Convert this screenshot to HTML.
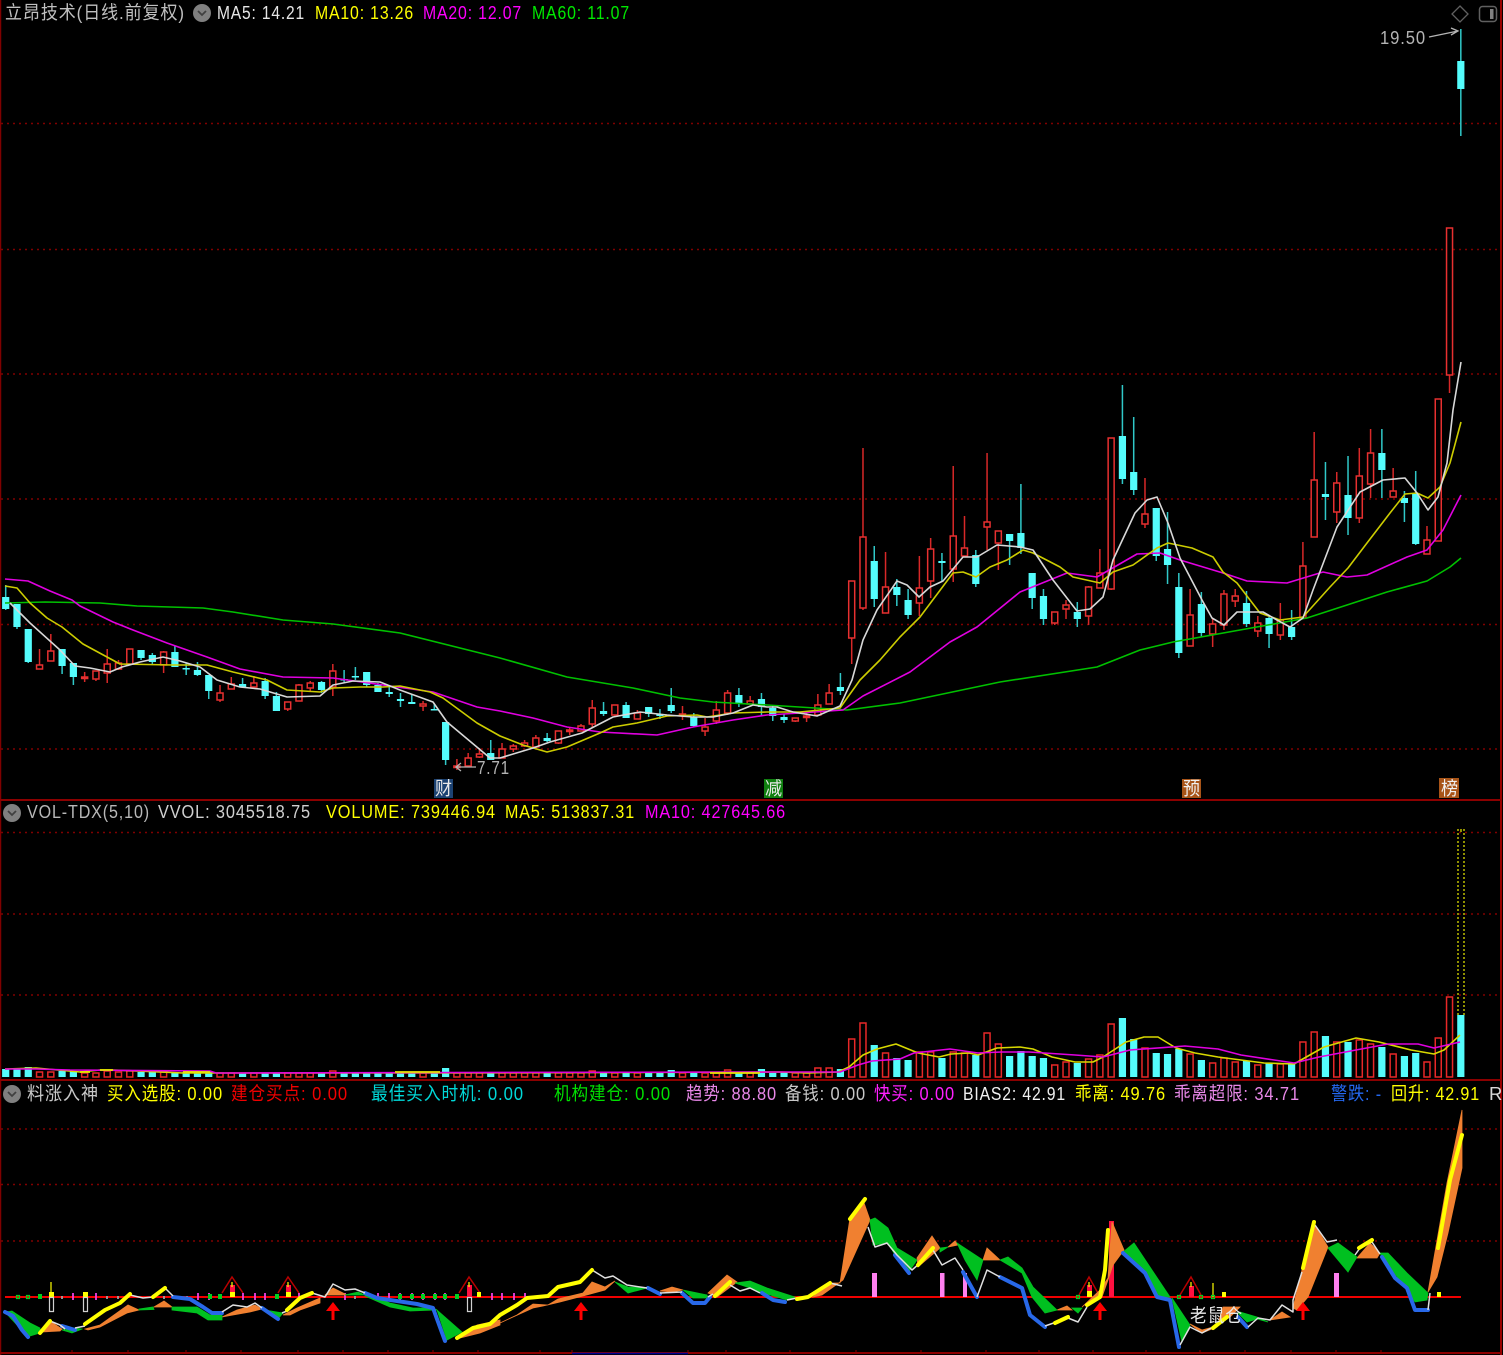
<!DOCTYPE html>
<html lang="zh"><head><meta charset="utf-8"><title>立昂技术</title>
<style>
html,body{margin:0;padding:0;background:#000;width:1503px;height:1355px;overflow:hidden}
svg{display:block}
text{font-family:"Liberation Sans","Noto Sans CJK SC",sans-serif;font-size:18.5px;letter-spacing:1px}
.g{stroke:#800000;stroke-width:1.5;stroke-dasharray:2 4;fill:none}
.l{fill:none;stroke-width:1.6;stroke-linejoin:round}
.y{fill:none;stroke:#ffff00;stroke-width:4;stroke-linejoin:round;stroke-linecap:round}
.b{fill:none;stroke:#2868e8;stroke-width:4;stroke-linejoin:round;stroke-linecap:round}
.w{fill:none;stroke:#e0e0e0;stroke-width:1.5;stroke-linejoin:round}
.o{fill:#f08030;stroke:#f08030;stroke-width:.8}.n{fill:#00c020;stroke:#00c020;stroke-width:.8}
</style></head><body>
<svg id="s" xmlns="http://www.w3.org/2000/svg" width="1503" height="1355" viewBox="0 0 1503 1355">
<rect width="1503" height="1355" fill="#000"/>
<!-- frame -->
<path d="M.5 0V1355" stroke="#800000" stroke-width="1.5"/>
<path d="M1501 0V1355" stroke="#c00000" stroke-width="1.6"/>
<path d="M0 800H1501M0 1080H1501M0 1353H1501" stroke="#8c0000" stroke-width="2"/>
<path d="M1 1353H1501" stroke="#8c0000" stroke-width="2"/>
<path d="M72 1350V1353M128 1350V1353M186 1350V1353M241 1350V1353M298 1350V1353M343 1350V1353M388 1350V1353M433 1350V1353M478 1350V1353M540 1350V1353M572 1350V1353M688 1350V1353M726 1350V1353M790 1350V1353M856 1350V1353M921 1350V1353M986 1350V1353M1039 1350V1353M1093 1350V1353M1146 1350V1353M1200 1350V1353M1245 1350V1353M1291 1350V1353M1336 1350V1353M1381 1350V1353" stroke="#8c0000" stroke-width="1"/>
<path d="M572 1353.5H688" stroke="#000090" stroke-width="1.5"/>
<!-- grid -->
<path class="g" d="M1 123.5H1501M1 249.5H1501M1 374H1501M1 499H1501M1 624.5H1501M1 749H1501M1 832.5H1501M1 914H1501M1 995H1501M1 1129H1501M1 1184.5H1501M1 1241H1501"/>
<g id="candles"></g>
<g id="vols"></g>
<!-- MA lines -->
<polyline class="l" stroke="#00c000" points="5,603 45,602 100,603 137,606 203,608 233,612 283,620 333,624 400,633 500,658 567,677 633,688 680,698 713,702 767,705 847,710 900,703 1000,682 1097,667 1140,650 1173,642 1240,630 1307,618 1387,592 1427,581 1450,567 1461,558"/>
<polyline class="l" stroke="#e000e0" points="5,579 28,581 50,591 72,600 80,606 113,622 133,630 167,643 207,657 240,669 283,677 333,678 383,685 433,692 477,707 500,711 533,718 567,727 600,732 657,735 693,727 733,720 767,715 800,713 843,710 863,696 910,672 950,642 977,627 1020,592 1067,573 1097,577 1137,554 1160,553 1180,560 1223,573 1247,581 1287,583 1323,572 1347,577 1367,575 1407,557 1427,550 1443,530 1461,495"/>
<polyline class="l" stroke="#cccc00" points="5,586 17,588 30,603 47,618 62,627 83,644 107,657 120,664 173,665 207,665 233,672 267,680 287,690 320,692 333,688 360,687 383,687 400,686 430,692 443,698 477,723 500,736 523,745 547,752 567,747 600,733 613,727 637,723 667,716 697,715 707,717 733,713 767,712 800,712 840,708 860,680 880,660 900,637 920,617 953,573 963,572 976,577 990,567 1007,560 1023,550 1033,553 1060,567 1073,577 1100,583 1113,572 1133,565 1157,548 1168,543 1192,548 1213,557 1223,572 1237,583 1260,613 1280,620 1303,617 1330,587 1348,568 1367,543 1390,513 1405,494 1417,493 1428,498 1440,487 1450,463 1461,422"/>
<polyline class="l" stroke="#d8d8d8" points="10,603 30,623 60,650 75,666 90,668 110,672 122,667 140,662 163,657 180,661 200,667 217,680 240,687 260,689 287,697 320,696 333,685 353,681 380,682 400,690 433,702 447,722 490,758 500,758 533,748 550,742 582,733 613,717 640,712 667,715 693,717 713,717 733,713 753,705 767,707 777,707 793,712 817,716 840,706 852,680 863,640 877,610 897,581 907,585 919,597 930,587 943,581 963,557 977,557 997,545 1020,547 1033,550 1053,580 1077,611 1090,609 1103,597 1113,560 1135,513 1147,500 1157,497 1168,523 1180,558 1202,600 1212,618 1224,625 1237,612 1263,612 1277,620 1290,627 1303,618 1313,590 1337,527 1360,492 1383,480 1405,478 1417,493 1428,510 1438,497 1447,463 1453,410 1461,362"/>
<!-- price notes -->
<text x="1380" y="44" fill="#b4b4b4" textLength="46" lengthAdjust="spacingAndGlyphs">19.50</text>
<path d="M1429 37L1458 31M1451 28L1458 31L1451 35" fill="none" stroke="#b4b4b4" stroke-width="1.3"/>
<text x="477" y="774" fill="#b4b4b4" textLength="33" lengthAdjust="spacingAndGlyphs">7.71</text>
<path d="M476 767H456M461 763L456 767L461 771" fill="none" stroke="#b4b4b4" stroke-width="1.3"/>
<!-- event tags -->
<rect x="434" y="779" width="19" height="19" fill="#1c4272"/><text x="435" y="795" fill="#e8e8e8" textLength="18" lengthAdjust="spacingAndGlyphs">财</text>
<rect x="764" y="779" width="19" height="19" fill="#108010"/><text x="765" y="795" fill="#e8e8e8" textLength="18" lengthAdjust="spacingAndGlyphs">减</text>
<rect x="1182" y="779" width="19" height="19" fill="#a85418"/><text x="1183" y="795" fill="#f0f0f0" textLength="18" lengthAdjust="spacingAndGlyphs">预</text>
<rect x="1439" y="778" width="20" height="20" fill="#a85418"/><text x="1441" y="795" fill="#f0f0f0" textLength="18" lengthAdjust="spacingAndGlyphs">榜</text>
<!-- volume overflow dotted -->
<path d="M1458 829V1016M1464 829V1016" stroke="#909000" stroke-width="2" stroke-dasharray="2 2" fill="none"/>
<path d="M1461 829V832" stroke="#909000" stroke-width="2"/>
<!-- volume MA -->
<polyline class="l" stroke="#d8d800" points="5,1069 36,1068 80,1072 100,1070 113,1070 183,1073 300,1073 440,1073 780,1072 808,1073 838,1072 849,1067 863,1055 877,1049 896,1044 918,1053 939,1057 951,1054 969,1053 978,1055 997,1048 1020,1047 1033,1049 1052,1057 1075,1062 1093,1062 1103,1057 1126,1042 1144,1037 1158,1037 1176,1048 1195,1053 1218,1057 1241,1060 1264,1063 1294,1064 1301,1060 1324,1047 1356,1038 1379,1042 1411,1050 1434,1054 1444,1050 1460,1035"/>
<polyline class="l" stroke="#e000e0" points="5,1069 36,1069 70,1070 210,1071 216,1073 780,1072 840,1072 858,1065 872,1061 900,1059 914,1053 950,1049 978,1053 1001,1052 1029,1052 1075,1055 1103,1057 1130,1050 1185,1046 1218,1049 1241,1055 1294,1063 1319,1057 1356,1050 1388,1044 1418,1044 1434,1048 1460,1042"/>
<path d="M80 1072H90M100 1070H113M183 1072H210M395 1072H440M710 1073H760" stroke="#e8e800" stroke-width="1.8"/>
<!-- indicator: baseline -->
<path d="M5 1297H1461" stroke="#f00000" stroke-width="2"/>
<!-- triangles -->
<path d="M222 1293L232 1277L243 1293M278 1293L288 1277L299 1293M459 1293L469 1277L480 1293M1079 1295L1089 1277L1099 1295M1180 1295L1191 1277L1201 1295" fill="none" stroke="#b80000" stroke-width="1.5"/>
<path d="M230 1285h5v8h-5zM286 1285h5v8h-5zM467 1285h5v12h-5zM1087 1285h5v7h-5zM1189 1286h5v11h-5z" fill="#ff1040"/>
<path d="M230 1292h5v5h-5zM286 1292h5v5h-5zM1087 1291h5v6h-5zM49 1292h5v5h-5zM83 1292h5v5h-5zM1222 1292h4v5h-4zM1437 1292h4v5h-4zM477 1292h4v5h-4z" fill="#ffff00"/>
<path d="M51 1282V1292M232 1282V1287M288 1282V1287M469 1282V1287M1089 1282V1287M1191 1282V1287M1213 1283V1297" stroke="#ffff00" stroke-width="1.2"/>
<path d="M49.5 1297.5h4v14h-4zM83.5 1297.5h4v14h-4zM467.5 1297.5h4v14h-4z" fill="#000" stroke="#d0d0d0" stroke-width="1.2"/>
<!-- ticks -->
<path d="M73 1293V1300M96 1293V1300M198 1293V1300M209 1293V1300M243 1293V1300M255 1293V1300M265 1293V1300M299 1293V1300M345 1293V1300M378 1293V1300M389 1293V1300M400 1293V1300M412 1293V1300M423 1293V1300M435 1293V1300M445 1293V1300M492 1293V1300M502 1293V1300M514 1293V1300M525 1293V1300" stroke="#f040e0" stroke-width="1.8"/>
<path d="M62 1296V1299M107 1296V1299M118 1296V1299M164 1296V1299M187 1296V1299M355 1296V1299" stroke="#a0a0a0" stroke-width="1.8"/>
<path d="M16.5 1295.5h3v3h-3zM26.5 1295.5h3v3h-3zM1076.5 1295.5h3v3h-3zM1177.5 1295.5h3v3h-3zM1199.5 1295.5h3v3h-3zM1211.5 1295.5h3v3h-3z" fill="none" stroke="#00d020" stroke-width="1.2"/>
<path d="M38 1294h4v5h-4zM208 1294h4v5h-4zM218 1294h4v5h-4zM275 1294h4v5h-4zM398 1294h4v5h-4zM410 1294h4v5h-4zM421 1294h4v5h-4zM433 1294h4v5h-4zM443 1294h4v5h-4zM455 1294h4v5h-4z" fill="#00d020"/>
<!-- pink bars -->
<path d="M872 1273h5v24h-5zM940 1273h4.500v24h-4.500zM963 1273h4v24h-4zM1334 1273h5v24h-5z" fill="#ff80f0"/>
<path d="M1109 1221h5v76h-5z" fill="#ff1040"/>
<!-- orange bands -->
<g class="o">
<polygon points="40,1333 50,1321 62,1329 60,1331 42,1332"/>
<polygon points="85,1329 100,1325 128,1305 139,1310 127,1313 100,1327 88,1330"/>
<polygon points="154,1307 164,1301 172,1307"/>
<polygon points="222,1317 237,1310 255,1305 262,1309 250,1312 233,1315"/>
<polygon points="283,1315 297,1308 320,1298 320,1303 300,1310 290,1315"/>
<polygon points="325,1295 333,1288 347,1295"/>
<polygon points="460,1338 480,1333 500,1325 500,1320 477,1325"/>
<polygon points="500,1323 517,1315 533,1304 548,1305 558,1299 583,1293 592,1282 605,1287 615,1281 605,1290 583,1296 560,1302 543,1306 533,1308 513,1317"/>
<polygon points="660,1291 672,1287 683,1290 672,1292"/>
<polygon points="708,1293 727,1275 737,1282 717,1297"/>
<polygon points="813,1297 828,1283 840,1283 850,1218 863,1200 870,1220 843,1280 822,1295"/>
<polygon points="917,1258 932,1236 940,1248 918,1267"/>
<polygon points="948,1247 955,1241 958,1245"/>
<polygon points="983,1260 987,1248 1000,1260"/>
<polygon points="1057,1310 1067,1306 1072,1310"/>
<polygon points="1082,1307 1100,1290 1108,1278 1112,1222 1124,1250 1113,1265 1108,1280 1102,1297 1087,1303"/>
<polygon points="1190,1324 1202,1333 1217,1327 1223,1307 1240,1307 1230,1317 1213,1327 1202,1330"/>
<polygon points="1270,1320 1282,1312 1290,1317"/>
<polygon points="1293,1308 1302,1270 1313,1222 1328,1247 1308,1297 1297,1310"/>
<polygon points="1357,1258 1370,1243 1380,1253 1377,1258"/>
<polygon points="1428,1292 1447,1183 1462,1110 1462,1168 1448,1233 1437,1277"/>
</g>
<!-- green bands -->
<g class="n">
<polygon points="5,1312 12,1311 30,1323 40,1328 40,1333 30,1336 28,1337"/>
<polygon points="62,1330 72,1333 82,1329 75,1328"/>
<polygon points="139,1309 153,1307 154,1309.500 139,1310"/>
<polygon points="172,1307 197,1307 210,1315 222,1315 222,1320 208,1320 197,1313 172,1310"/>
<polygon points="265,1310 283,1313 278,1319"/>
<polygon points="345,1295 358,1292 365,1295"/>
<polygon points="365,1293 390,1303 413,1308 433,1308 437,1310 410,1311 390,1307 365,1296"/>
<polygon points="437,1310 462,1332 447,1340"/>
<polygon points="615,1282 628,1287 647,1288 628,1293"/>
<polygon points="683,1290 707,1295 708,1298 693,1298"/>
<polygon points="735,1283 750,1281 767,1288 795,1297 787,1300 760,1292 747,1287"/>
<polygon points="870,1220 875,1218 888,1228 897,1248 917,1260 908,1273 895,1255 888,1243 873,1245"/>
<polygon points="940,1248 948,1247 940,1252"/>
<polygon points="957,1243 983,1260 977,1280 965,1260"/>
<polygon points="1000,1260 1008,1257 1022,1268 1033,1287 1057,1310 1045,1313 1032,1297 1022,1273"/>
<polygon points="1072,1308 1082,1308 1078,1313"/>
<polygon points="1123,1252 1134,1243 1170,1297 1157,1297 1145,1273"/>
<polygon points="1172,1298 1190,1325 1182,1342"/>
<polygon points="1240,1312 1257,1317 1268,1322 1257,1319 1247,1322 1238,1313"/>
<polygon points="1328,1248 1338,1243 1357,1257 1348,1272"/>
<polygon points="1380,1253 1388,1253 1407,1273 1428,1293 1427,1300 1415,1302 1405,1287 1382,1257"/>
</g>
<!-- blue thick -->
<polyline class="b" points="5,1312 13,1316 22,1330 28,1337"/>
<polyline class="b" points="62,1326 75,1330"/>
<polyline class="b" points="173,1297 190,1299 203,1307 212,1313 222,1313"/>
<polyline class="b" points="262,1308 278,1319"/>
<polyline class="b" points="365,1293 377,1298 417,1304 433,1308 445,1341"/>
<polyline class="b" points="648,1288 660,1294"/>
<polyline class="b" points="682,1293 693,1303 705,1303 710,1297"/>
<polyline class="b" points="762,1293 773,1300 785,1302"/>
<polyline class="b" points="895,1255 909,1273"/>
<polyline class="b" points="963,1272 977,1297"/>
<polyline class="b" points="1000,1277 1022,1288 1030,1315 1045,1327"/>
<polyline class="b" points="1123,1253 1145,1273 1157,1297 1170,1300 1179,1347"/>
<polyline class="b" points="1238,1317 1247,1327"/>
<polyline class="b" points="1382,1257 1395,1278 1407,1288 1415,1310 1428,1310"/>
<!-- white thin -->
<polyline class="w" points="50,1321 60,1325 65,1329"/>
<polyline class="w" points="75,1328 85,1326"/>
<polyline class="w" points="130,1295 143,1298 153,1297"/>
<polyline class="w" points="165,1288 173,1296"/>
<polyline class="w" points="222,1312 233,1305 247,1307 255,1303 262,1308"/>
<polyline class="w" points="282,1313 287,1311"/>
<polyline class="w" points="312,1293 325,1297 333,1284 345,1290 355,1289 365,1293"/>
<polyline class="w" points="592,1270 605,1278 613,1276 627,1285 647,1288"/>
<polyline class="w" points="660,1293 682,1292"/>
<polyline class="w" points="708,1297 713,1294"/>
<polyline class="w" points="730,1285 740,1291 750,1288 760,1293"/>
<polyline class="w" points="787,1300 797,1298"/>
<polyline class="w" points="830,1283 842,1286"/>
<polyline class="w" points="868,1227 875,1247 887,1243 897,1255 912,1270 920,1263 933,1250 942,1265 955,1258 963,1270"/>
<polyline class="w" points="977,1297 987,1270 1000,1277"/>
<polyline class="w" points="1045,1326 1068,1318 1078,1322 1087,1307"/>
<polyline class="w" points="1180,1345 1190,1327 1202,1333 1213,1327"/>
<polyline class="w" points="1248,1327 1258,1318 1270,1320 1282,1305 1293,1312 1293,1300 1302,1272"/>
<polyline class="w" points="1315,1225 1327,1242 1337,1240"/>
<polyline class="w" points="1355,1255 1360,1248 1372,1242 1380,1254"/>
<polyline class="w" points="1428,1310 1430,1293"/>
<!-- yellow thick -->
<polyline class="y" points="40,1333 50,1321"/>
<polyline class="y" points="85,1324 95,1317 105,1310 120,1303 130,1294"/>
<polyline class="y" points="153,1297 165,1288"/>
<polyline class="y" points="287,1310 300,1298 312,1293"/>
<polyline class="y" points="457,1338 473,1328 490,1324 500,1315 517,1305 527,1298 548,1296 558,1287 580,1282 592,1270"/>
<polyline class="y" points="715,1296 730,1282"/>
<polyline class="y" points="797,1299 808,1297 830,1283"/>
<polyline class="y" points="850,1219 865,1199"/>
<polyline class="y" points="918,1265 933,1248"/>
<polyline class="y" points="1055,1323 1068,1317"/>
<polyline class="y" points="1087,1305 1100,1297 1105,1270 1108,1230"/>
<polyline class="y" points="1213,1328 1227,1317"/>
<polyline class="y" points="1303,1268 1308,1247 1314,1222"/>
<polyline class="y" points="1359,1248 1372,1240"/>
<polyline class="y" points="1438,1248 1450,1180 1462,1135"/>
<!-- red up arrows -->
<path d="M333 1302l7 9h-5.500v9h-3v-9h-5.500zM581 1302l7 9h-5.500v9h-3v-9h-5.500zM1100 1302l7 9h-5.500v9h-3v-9h-5.500zM1303 1302l7 9h-5.500v9h-3v-9h-5.500z" fill="#ff0000"/>
<text x="1190" y="1322" fill="#e8e8e8" textLength="53" lengthAdjust="spacingAndGlyphs">老鼠仓</text>
<!-- header 1 -->
<text x="5" y="19" fill="#c0c0c0" textLength="180" lengthAdjust="spacingAndGlyphs">立昂技术(日线.前复权)</text>
<circle cx="202" cy="13" r="9" fill="#808080"/><path d="M198 11l4 4 4-4" fill="none" stroke="#404040" stroke-width="1.8"/>
<text x="217" y="19" fill="#e6e6e6" textLength="88" lengthAdjust="spacingAndGlyphs">MA5: 14.21</text>
<text x="315" y="19" fill="#ffff00" textLength="99" lengthAdjust="spacingAndGlyphs">MA10: 13.26</text>
<text x="423" y="19" fill="#ff00ff" textLength="99" lengthAdjust="spacingAndGlyphs">MA20: 12.07</text>
<text x="532" y="19" fill="#00e800" textLength="98" lengthAdjust="spacingAndGlyphs">MA60: 11.07</text>
<path d="M1460 6l8 8-8 8-8-8z" fill="none" stroke="#606060" stroke-width="1.3"/>
<rect x="1479.500" y="6.500" width="17" height="15" rx="3" fill="none" stroke="#606060" stroke-width="1.5"/><rect x="1490" y="9" width="3.500" height="10" fill="#808080"/>
<!-- header 2 -->
<circle cx="12" cy="813" r="9" fill="#808080"/><path d="M8 811l4 4 4-4" fill="none" stroke="#404040" stroke-width="1.8"/>
<text x="27" y="818" fill="#b8b8b8" textLength="123" lengthAdjust="spacingAndGlyphs">VOL-TDX(5,10)</text>
<text x="158" y="818" fill="#d0d0d0" textLength="153" lengthAdjust="spacingAndGlyphs">VVOL: 3045518.75</text>
<text x="326" y="818" fill="#ffff00" textLength="170" lengthAdjust="spacingAndGlyphs">VOLUME: 739446.94</text>
<text x="505" y="818" fill="#ffff00" textLength="130" lengthAdjust="spacingAndGlyphs">MA5: 513837.31</text>
<text x="645" y="818" fill="#ff00ff" textLength="141" lengthAdjust="spacingAndGlyphs">MA10: 427645.66</text>
<!-- header 3 -->
<circle cx="12" cy="1094" r="9" fill="#808080"/><path d="M8 1092l4 4 4-4" fill="none" stroke="#404040" stroke-width="1.8"/>
<text x="27" y="1100" fill="#c8c8c8" textLength="72" lengthAdjust="spacingAndGlyphs">料涨入神</text>
<text x="107" y="1100" fill="#ffff00" textLength="116" lengthAdjust="spacingAndGlyphs">买入选股: 0.00</text>
<text x="231" y="1100" fill="#f00000" textLength="117" lengthAdjust="spacingAndGlyphs">建仓买点: 0.00</text>
<text x="371" y="1100" fill="#00d8d8" textLength="153" lengthAdjust="spacingAndGlyphs">最佳买入时机: 0.00</text>
<text x="554" y="1100" fill="#00e000" textLength="117" lengthAdjust="spacingAndGlyphs">机构建仓: 0.00</text>
<text x="686" y="1100" fill="#e888e8" textLength="91" lengthAdjust="spacingAndGlyphs">趋势: 88.80</text>
<text x="785" y="1100" fill="#c8c8c8" textLength="81" lengthAdjust="spacingAndGlyphs">备钱: 0.00</text>
<text x="874" y="1100" fill="#ff20ff" textLength="81" lengthAdjust="spacingAndGlyphs">快买: 0.00</text>
<text x="963" y="1100" fill="#f0f0f0" textLength="103" lengthAdjust="spacingAndGlyphs">BIAS2: 42.91</text>
<text x="1075" y="1100" fill="#ffff00" textLength="91" lengthAdjust="spacingAndGlyphs">乖离: 49.76</text>
<text x="1174" y="1100" fill="#e888e8" textLength="126" lengthAdjust="spacingAndGlyphs">乖离超限: 34.71</text>
<text x="1331" y="1100" fill="#2468f0" textLength="51" lengthAdjust="spacingAndGlyphs">警跌: -</text>
<text x="1391" y="1100" fill="#ffff00" textLength="89" lengthAdjust="spacingAndGlyphs">回升: 42.91</text>
<text x="1489" y="1100" fill="#d8d8d8">R</text>
</svg>
<script>
(function(){
var C=[[597,609,585,610],[604,627,604,629],[629,662,629,663],[-665,669,649,669],[-651,661,634,661],[649,666,649,674],[663,677,663,685],[-677,678,672,682],[-671,679,671,681],[-664,673,649,683],[-663,669,660,670],[-649,664,649,664],[650,658,650,660],[655,662,653,664],[-652,665,651,673],[652,667,646,667],[668,669,663,675],[670,675,662,676],[675,691,675,699],[-693,700,685,702],[-684,689,677,689],[684,687,678,687],[-683,687,676,688],[681,696,678,699],[696,711,692,711],[-702,709,702,711],[-685,701,684,701],[-683,688,681,692],[682,690,681,693],[-671,687,664,696],[679,680,670,682],[676,677,667,680],[672,685,672,687],[685,692,683,692],[692,694,687,697],[699,701,693,707],[702,704,695,704],[-704,706,701,711],[709,710,704,710],[722,760,722,765],[-766,767,759,770],[-758,766,753,766],[-754,757,748,758],[753,760,740,760],[-749,758,743,758],[-746,749,744,752],[-743,746,740,747],[-738,747,735,748],[738,741,733,742],[-731,743,731,744],[-730,731,728,735],[-726,731,724,731],[-708,724,700,727],[711,714,702,716],[-705,715,705,717],[705,718,702,718],[-713,719,710,719],[707,714,707,717],[714,716,709,719],[705,711,688,713],[-714,715,706,720],[717,726,713,727],[-727,731,718,736],[-710,721,701,724],[-693,713,690,715],[695,704,688,707],[-701,704,696,704],[699,707,693,716],[708,716,706,721],[717,720,714,723],[-718,721,718,722],[-716,717,712,722],[-705,715,694,715],[-693,704,684,704],[687,691,673,695],[-581,638,581,664],[-537,608,448,610],[561,599,546,607],[-587,613,552,613],[587,595,579,606],[600,615,589,619],[-588,603,556,616],[-549,581,538,598],[561,563,553,581],[-536,569,466,582],[-548,556,516,556],[555,584,550,587],[-522,527,453,550],[-531,543,531,570],[534,541,534,565],[533,548,484,554],[573,598,573,609],[596,619,589,625],[-612,623,612,625],[-605,609,600,619],[612,619,602,627],[-587,616,586,625],[-573,588,549,588],[-438,589,438,590],[436,479,385,484],[472,490,417,495],[-514,524,478,528],[508,556,508,561],[549,565,512,584],[587,653,573,658],[-615,646,589,646],[604,633,592,637],[-624,634,618,647],[-594,625,590,630],[-596,601,589,607],[603,624,591,627],[-623,631,616,637],[618,634,615,648],[-620,635,603,640],[627,637,610,640],[-566,618,542,618],[-480,537,432,537],[494,497,462,520],[-483,512,472,523],[495,518,456,535],[-476,518,448,523],[-453,484,429,498],[453,470,429,498],[-491,497,468,497],[498,503,491,522],[493,544,471,545],[-540,554,526,554],[-399,541,399,541],[-228,375,228,393],[61,89,29,136]];
var V=[1069,1069,1067,1072,1072,1071,1071,1073,1073,1071,1072,1071,1072,1072,1072,1072,1072,1072,1071];
for(var i=19;i<69;i++)V[i]=1073;
V[29]=1071;V[39]=1068;V[52]=1071;V[59]=1070;V[64]=1070;V[67]=1069;
var W=[1072,1073,1073,1068,1068,1069,1039,1023,1045,1053,1058,1060,1052,1052,1058,1052,1053,1055,1033,1044,1056,1051,1056,1058,1065,1062,1063,1059,1055,1024,1018,1039,1048,1053,1054,1049,1054,1060,1063,1058,1062,1061,1065,1063,1064,1063,1042,1032,1036,1042,1042,1040,1044,1047,1054,1056,1053,1062,1038,997,1015];
for(i=0;i<W.length;i++)V[69+i]=W[i];
var a='',b='';
for(i=0;i<C.length;i++){
 var c=C[i],x=5.7+11.28*i,red=c[0]<0,t=Math.abs(c[0]),h=c[1]-t;if(h<1.5)h=1.5;
 var col=red?'#d82828':'#30c8c8';
 a+='<path d="M'+x+' '+c[2]+'V'+c[3]+'" stroke="'+col+'" stroke-width="1.5"/>';
 if(red)a+='<rect x="'+(x-3)+'" y="'+t+'" width="6" height="'+h+'" fill="#000" stroke="#e83030" stroke-width="1.5"/>';
 else a+='<rect x="'+(x-3.6)+'" y="'+t+'" width="7.2" height="'+h+'" fill="#54fcfc"/>';
 var v=V[i],vh=1077-v;
 if(red)b+='<rect x="'+(x-3)+'" y="'+v+'" width="6" height="'+vh+'" fill="#000" stroke="#e82828" stroke-width="1.5"/>';
 else b+='<rect x="'+(x-3.6)+'" y="'+v+'" width="7.2" height="'+vh+'" fill="#54fcfc"/>';
}
document.getElementById('candles').innerHTML=a;
document.getElementById('vols').innerHTML=b;
})();
</script>
</body></html>
